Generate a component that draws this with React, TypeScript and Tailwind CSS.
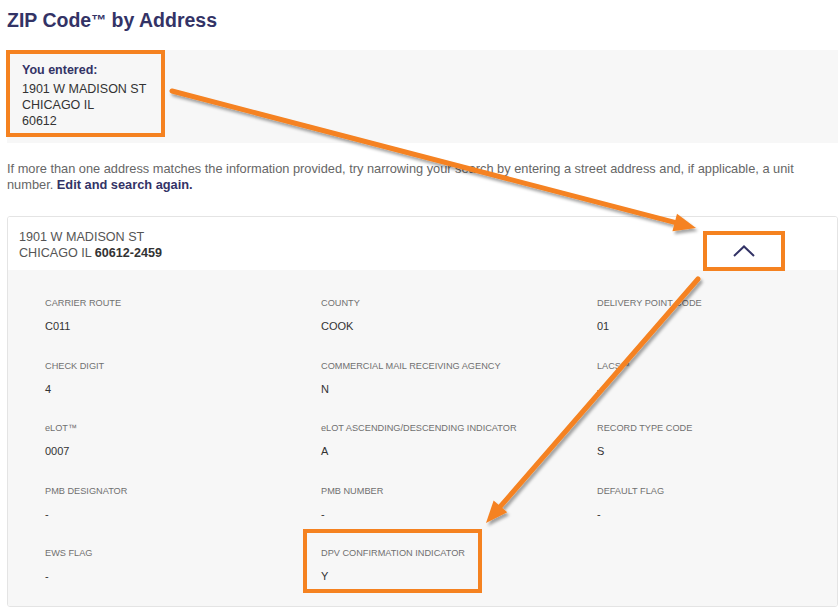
import React from "react";

const ORANGE = "#F58220";

function Arrow({ x1, y1, x2, y2 }: { x1: number; y1: number; x2: number; y2: number }) {
  const dx = x2 - x1;
  const dy = y2 - y1;
  const len = Math.sqrt(dx * dx + dy * dy);
  const ux = dx / len;
  const uy = dy / len;
  const hl = 22;
  const hw = 9;
  const bx = x2 - ux * hl;
  const by = y2 - uy * hl;
  const px = -uy;
  const py = ux;
  const pts = `${x2},${y2} ${bx + px * hw},${by + py * hw} ${bx - px * hw},${by - py * hw}`;
  return (
    <g filter="url(#shadow)">
      <line x1={x1} y1={y1} x2={bx + ux * 2} y2={by + uy * 2} stroke={ORANGE} strokeWidth={5} strokeLinecap="round" />
      <polygon points={pts} fill={ORANGE} />
    </g>
  );
}

const rows: [string, string][][] = [
  [["CARRIER ROUTE", "C011"], ["COUNTY", "COOK"], ["DELIVERY POINT CODE", "01"]],
  [["CHECK DIGIT", "4"], ["COMMERCIAL MAIL RECEIVING AGENCY", "N"], ["LACS™", "-"]],
  [["eLOT™", "0007"], ["eLOT ASCENDING/DESCENDING INDICATOR", "A"], ["RECORD TYPE CODE", "S"]],
  [["PMB DESIGNATOR", "-"], ["PMB NUMBER", "-"], ["DEFAULT FLAG", "-"]],
  [["EWS FLAG", "-"], ["DPV CONFIRMATION INDICATOR", "Y"]],
];

export default function App() {
  return (
    <div
      className="relative w-[839px] h-[609px] overflow-hidden bg-white pl-[7px] pr-[1px] pt-[8px]"
      style={{ fontFamily: '"Liberation Sans", Arial, Helvetica, sans-serif' }}
    >
      <h1 className="text-[19.5px] leading-[24px] font-bold text-[#333366] m-0">
        ZIP Code<span className="text-[15px] align-[2px]">™</span> by Address
      </h1>

      <div className="mt-[18px] bg-[#f7f7f7] pl-[15px] pt-[12px] pb-[14px]">
        <div className="text-[12.5px] leading-[16px] font-bold text-[#333366]">You entered:</div>
        <div className="mt-[3px] text-[12.5px] leading-[16px] text-[#333333]">
          <div>1901 W MADISON ST</div>
          <div>CHICAGO IL</div>
          <div>60612</div>
        </div>
      </div>

      <p className="mt-[18px] text-[12.8px] leading-[16px] text-[#666666]">
        If more than one address matches the information provided, try narrowing your search by entering a street
        address and, if applicable, a unit
        <br />
        number. <span className="font-bold text-[#333366]">Edit and search again.</span>
      </p>

      <div className="mt-[23px] border border-[#e4e4e4] rounded-[3px] overflow-hidden">
        <div className="h-[53px] bg-white flex justify-between">
          <div className="pl-[11px] pt-[12px] text-[12.6px] leading-[16px] text-[#555555]">
            <div>1901 W MADISON ST</div>
            <div>
              CHICAGO IL <span className="font-bold text-[#333333]">60612-2459</span>
            </div>
          </div>
          <div className="self-end mr-[54px] mb-[1px] w-[78px] h-[36px] flex items-center justify-center">
            <svg width="22" height="12" viewBox="0 0 22 12">
              <polyline points="1,11 11,1.5 21,11" fill="none" stroke="#333366" strokeWidth="2" />
            </svg>
          </div>
        </div>
        <div className="bg-[#f7f7f7] pl-[37px] pt-[27px] pb-[23px] grid grid-cols-[276px_276px_1fr] gap-y-[26.5px]">
          {rows.flat().map(([label, value]) => (
            <div key={label}>
              <div className="text-[9.2px] leading-[12px] text-[#707070] whitespace-nowrap">{label}</div>
              <div className="mt-[10px] text-[11px] leading-[14px] text-[#333333]">{value}</div>
            </div>
          ))}
        </div>
      </div>

      <svg className="absolute left-0 top-0 pointer-events-none" width="839" height="609" viewBox="0 0 839 609">
        <defs>
          <filter id="shadow" x="-10%" y="-10%" width="130%" height="130%">
            <feDropShadow dx="2" dy="3" stdDeviation="1.5" floodColor="#000000" floodOpacity="0.35" />
          </filter>
        </defs>
        <rect x="8" y="52" width="155" height="83" fill="none" stroke={ORANGE} strokeWidth="4" />
        <rect x="705" y="233" width="78" height="36" fill="none" stroke={ORANGE} strokeWidth="4" />
        <rect x="305" y="531" width="175" height="60" fill="none" stroke={ORANGE} strokeWidth="4" />
        <Arrow x1={172} y1={91} x2={696} y2={228} />
        <Arrow x1={698} y1={279} x2={486} y2={523} />
      </svg>
    </div>
  );
}
